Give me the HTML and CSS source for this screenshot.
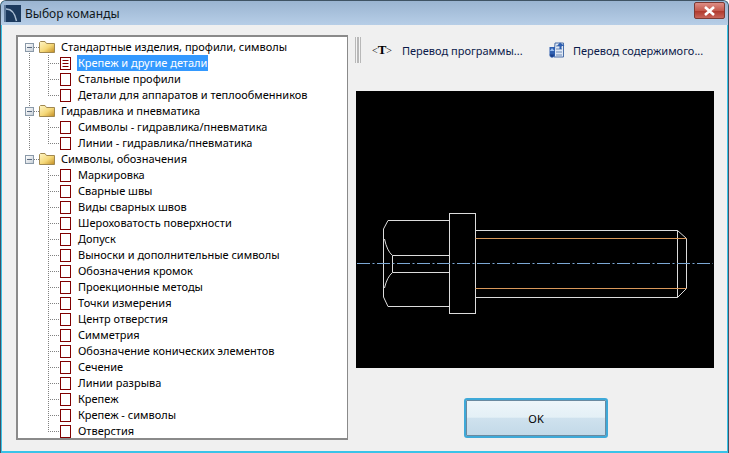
FILE: index.html
```html
<!DOCTYPE html>
<html lang="ru">
<head>
<meta charset="utf-8">
<title>Выбор команды</title>
<link rel="stylesheet" href="styles.css">
</head>
<body>
<svg width="0" height="0" class="defs">
  <defs>
    <linearGradient id="fold" x1="0" y1="0" x2="1" y2="1">
      <stop offset="0" stop-color="#fff6c8"/><stop offset="0.55" stop-color="#f5d878"/><stop offset="1" stop-color="#c08a20"/>
    </linearGradient>
    <symbol id="folder" viewBox="0 0 16 12">
      <path d="M0.5 11.5V1.5L1.5 .5H6L7.5 2.5H15.5V11.5Z" fill="url(#fold)" stroke="#a08850"/>
    </symbol>
    <symbol id="doc" viewBox="0 0 11 13">
      <rect x="0.5" y="0.5" width="10" height="12" fill="#fff" stroke="#800000"/>
    </symbol>
    <symbol id="docl" viewBox="0 0 11 13">
      <rect x="0.5" y="0.5" width="10" height="12" fill="#fff" stroke="#800000"/>
      <path d="M2.5 3.5H8.5M2.5 6.5H8.5M2.5 9.5H8.5" stroke="#800000"/>
    </symbol>
  </defs>
</svg>
<main class="window">
  <header class="titlebar">
    <svg class="appicon" viewBox="0 0 17 17" width="17" height="17"><rect width="17" height="17" fill="#1c3a5e"/><path d="M1 4Q10 3 12.5 16" fill="none" stroke="#a9bdd2" stroke-width="1.5"/><rect x="0" y="0" width="2" height="17" fill="#5f7b9b"/></svg>
    <span class="title">Выбор команды</span>
    <button class="close" type="button" aria-label="Закрыть">
      <svg viewBox="0 0 13 10" width="13" height="10"><path d="M2 1L11 9M11 1L2 9" stroke="#fff" stroke-width="2.6"/></svg>
    </button>
  </header>
  <div class="client">
    <ul class="tree">
      <li class="group trunk first">
        <div class="row root"><span class="knob"></span><span class="stub"></span><svg class="folder"><use href="#folder"/></svg><span class="label">Стандартные изделия, профили, символы</span></div>
        <div class="row child"><span class="elbow"></span><svg class="doc"><use href="#docl"/></svg><span class="label selected">Крепеж и другие детали</span></div>
        <div class="row child"><span class="elbow"></span><svg class="doc"><use href="#doc"/></svg><span class="label">Стальные профили</span></div>
        <div class="row child last"><span class="elbow"></span><svg class="doc"><use href="#doc"/></svg><span class="label">Детали для аппаратов и теплообменников</span></div>
      </li>
      <li class="group trunk">
        <div class="row root"><span class="knob"></span><span class="stub"></span><svg class="folder"><use href="#folder"/></svg><span class="label">Гидравлика и пневматика</span></div>
        <div class="row child"><span class="elbow"></span><svg class="doc"><use href="#doc"/></svg><span class="label">Символы - гидравлика/пневматика</span></div>
        <div class="row child last"><span class="elbow"></span><svg class="doc"><use href="#doc"/></svg><span class="label">Линии - гидравлика/пневматика</span></div>
      </li>
      <li class="group">
        <div class="row root"><span class="knob"></span><span class="stub"></span><svg class="folder"><use href="#folder"/></svg><span class="label">Символы, обозначения</span></div>
        <div class="row child"><span class="elbow"></span><svg class="doc"><use href="#doc"/></svg><span class="label">Маркировка</span></div>
        <div class="row child"><span class="elbow"></span><svg class="doc"><use href="#doc"/></svg><span class="label">Сварные швы</span></div>
        <div class="row child"><span class="elbow"></span><svg class="doc"><use href="#doc"/></svg><span class="label">Виды сварных швов</span></div>
        <div class="row child"><span class="elbow"></span><svg class="doc"><use href="#doc"/></svg><span class="label">Шероховатость поверхности</span></div>
        <div class="row child"><span class="elbow"></span><svg class="doc"><use href="#doc"/></svg><span class="label">Допуск</span></div>
        <div class="row child"><span class="elbow"></span><svg class="doc"><use href="#doc"/></svg><span class="label">Выноски и дополнительные символы</span></div>
        <div class="row child"><span class="elbow"></span><svg class="doc"><use href="#doc"/></svg><span class="label">Обозначения кромок</span></div>
        <div class="row child"><span class="elbow"></span><svg class="doc"><use href="#doc"/></svg><span class="label">Проекционные методы</span></div>
        <div class="row child"><span class="elbow"></span><svg class="doc"><use href="#doc"/></svg><span class="label">Точки измерения</span></div>
        <div class="row child"><span class="elbow"></span><svg class="doc"><use href="#doc"/></svg><span class="label">Центр отверстия</span></div>
        <div class="row child"><span class="elbow"></span><svg class="doc"><use href="#doc"/></svg><span class="label">Симметрия</span></div>
        <div class="row child"><span class="elbow"></span><svg class="doc"><use href="#doc"/></svg><span class="label">Обозначение конических элементов</span></div>
        <div class="row child"><span class="elbow"></span><svg class="doc"><use href="#doc"/></svg><span class="label">Сечение</span></div>
        <div class="row child"><span class="elbow"></span><svg class="doc"><use href="#doc"/></svg><span class="label">Линии разрыва</span></div>
        <div class="row child"><span class="elbow"></span><svg class="doc"><use href="#doc"/></svg><span class="label">Крепеж</span></div>
        <div class="row child"><span class="elbow"></span><svg class="doc"><use href="#doc"/></svg><span class="label">Крепеж - символы</span></div>
        <div class="row child last"><span class="elbow"></span><svg class="doc"><use href="#doc"/></svg><span class="label">Отверстия</span></div>
      </li>
    </ul>
    <section class="side">
      <div class="toolbar">
        <span class="gripper"></span>
        <span class="tool tool-t"><span class="ticon">&lt;<b>T</b>&gt;</span><span class="tool-text">Перевод программы...</span></span>
        <span class="tool tool-c">
          <svg class="cicon" viewBox="0 0 16 16" width="16" height="16">
            <path d="M6 1H14.5V15H5Z" fill="#dfe8f5" stroke="#4a6fa8"/>
            <path d="M7 4H13M7 7H13M7 10H13M7 13H13" stroke="#6c88b4"/>
            <path d="M.5 5H6V14L4 15.5H2L.5 14Z" fill="#2f5fb0"/>
            <path d="M3 6L5.5 9H.8Z" fill="#9cc0f0"/>
            <path d="M11 .5L15.5 4H12.5V7H10.5V4H8Z" fill="#2f5fb0"/>
            <path d="M3 15.5L.5 12.5H5.5Z" fill="#1c3f88"/>
          </svg>
          <span class="tool-text">Перевод содержимого...</span>
        </span>
      </div>
      <svg class="preview" viewBox="354 91 358 277" width="358" height="277">
        <rect x="354" y="91" width="358" height="277" fill="#000"/>
        <g fill="none" stroke="#dcdcdc" stroke-width="1">
          <rect x="447.5" y="213.5" width="26" height="100"/>
          <path d="M447.5 220.5H386L381.5 229V297L386 306.5H447.5"/>
          <path d="M447.5 255.5H390.5V272.5H447.5"/>
          <path d="M382.5 239Q385 251 390.5 255.5M382.5 288Q385 277 390.5 272.5"/>
          <path d="M473.5 230.5H675.5L684.5 238.5V288.5L675.5 297.5H473.5"/>
          <path d="M675.5 230.5V297.5"/>
        </g>
        <path d="M473.5 238.5H684.5M473.5 288.5H684.5" stroke="#d9985a" fill="none"/>
        <path d="M355 263.5H711" stroke="#7ba7d4" stroke-dasharray="13 2.5 2 2.5" fill="none"/>
      </svg>
      <div class="actions"><button class="ok" type="button">OK</button></div>
    </section>
  </div>
</main>
</body>
</html>
```
FILE: styles.css
```css
* { box-sizing: border-box; }
html, body { margin: 0; padding: 0; }
body { width: 729px; height: 453px; overflow: hidden; background: #fff; font-family: "Noto Sans", "Open Sans", sans-serif; font-size: 11px; color: #000; }
.defs { display: block; height: 0; }
.window { width: 729px; height: 453px; display: flex; flex-direction: column; border: 1px solid #3f5364; border-bottom: 0; border-radius: 6px 6px 0 0; background: #39c3e8; overflow: hidden; }
.titlebar { height: 24px; flex: none; display: flex; align-items: center; padding: 0 3px 0 3px; background: linear-gradient(#9ab4d1, #b7cee7); }
.appicon { flex: none; }
.title { margin-left: 4px; font-size: 12px; color: #101820; flex: 1; }
.close { width: 31px; height: 17px; padding: 0; margin-top: -5px; border: 1px solid #7c3a34; border-radius: 2px; background: linear-gradient(#dd8d85, #c45a4e 50%, #b03a2e 55%, #c8655a); display: flex; align-items: center; justify-content: center; }
.client { flex: 1; margin: 0 1px 2px 1px; background: #f0f0f0; display: flex; padding: 10px 0 0 14px; min-height: 0; }
.tree { list-style: none; margin: 0; padding: 2px 0 0 0; width: 332px; height: 405px; background: #fff; border: 1px solid #8a8a8a; border-width: 2px 1px 2px 2px; flex: none; }
.group { background-repeat: no-repeat; }
.trunk { background-image: repeating-linear-gradient(#808080 0 1px, transparent 1px 2px); background-size: 1px 100%; background-position: 11px 0; }
.trunk.first { background-position: 11px 12px; }
.row { height: 16px; display: flex; align-items: center; white-space: nowrap; }
.root { padding-left: 7px; }
.knob { width: 9px; height: 9px; flex: none; border: 1px solid #8a99a8; background: linear-gradient(90deg, transparent 1px, #5a6a80 1px, #5a6a80 6px, transparent 6px) center / 100% 1px no-repeat, linear-gradient(135deg, #fff, #c8d0d8); }
.stub { width: 5px; height: 1px; flex: none; background: repeating-linear-gradient(90deg, #808080 0 1px, transparent 1px 2px); }
.folder { width: 16px; height: 12px; flex: none; margin-right: 5px; }
.child { padding-left: 30px; }
.elbow { width: 12px; height: 16px; flex: none; background-image: repeating-linear-gradient(#808080 0 1px, transparent 1px 2px), repeating-linear-gradient(90deg, #808080 0 1px, transparent 1px 2px); background-repeat: no-repeat; background-size: 1px 100%, 100% 1px; background-position: 0 0, 0 8px; }
.last .elbow { background-size: 1px 9px, 100% 1px; }
.doc { width: 11px; height: 13px; flex: none; margin-right: 6px; }
.label { padding: 0 1px; height: 16px; line-height: 16px; color: #000; }
.selected { background: #3399ff; color: #fff; }
.side { margin-left: 7px; width: 359px; display: flex; flex-direction: column; }
.toolbar { height: 56px; display: flex; align-items: flex-start; flex: none; color: #0b1a4a; }
.gripper { width: 6px; height: 26px; margin-top: 2px; flex: none; background: linear-gradient(90deg, #b8b8b8 0 1px, #f4f4f4 1px 2px, #b8b8b8 2px 3px, #b8b8b8 3px 4px, #f4f4f4 4px 5px, #b8b8b8 5px 6px); }
.tool { display: flex; align-items: center; height: 16px; margin-top: 7px; }
.tool-t { margin-left: 11px; width: 177px; }
.ticon { width: 30px; font-family: "Liberation Serif", serif; font-size: 10px; color: #000; }
.ticon b { font-size: 13px; }
.cicon { margin-right: 8px; flex: none; }
.preview { display: block; flex: none; margin-left: 1px; }
.actions { flex: 1; display: flex; align-items: flex-start; padding: 30px 0 0 109px; }
.ok { width: 144px; height: 40px; font: 11px "Noto Sans", sans-serif; color: #000; border: 2px solid #3fa9d8; border-radius: 3px; background: linear-gradient(#eef6fa, #e4f0f6 48%, #cfe2ee 50%, #c2d9e8); box-shadow: 0 0 0 1px #6a8aa0 inset; }
```
